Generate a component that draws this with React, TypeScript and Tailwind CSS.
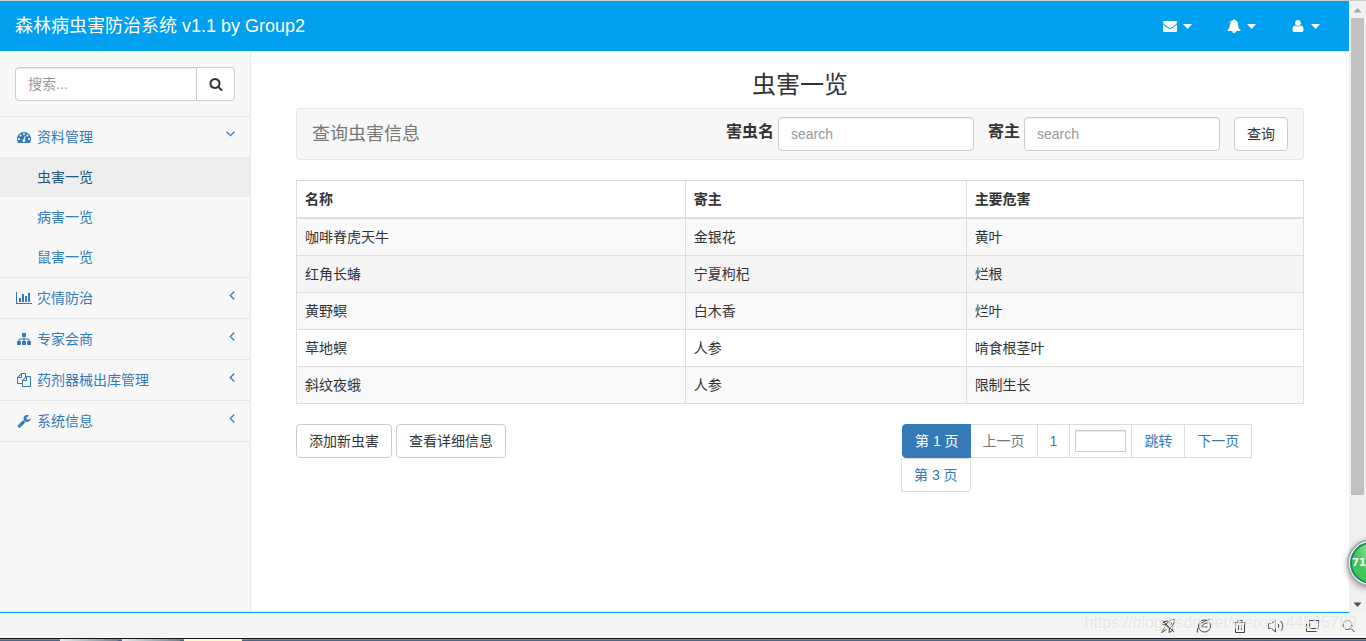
import React from "react";

const icons = {
  envelope:
    "M1792 710v794q0 66-47 113t-113 47h-1472q-66 0-113-47t-47-113v-794q44 49 101 87 362 246 497 345 57 42 92.5 65.5t94.5 48 110 24.5h2q51 0 110-24.5t94.5-48 92.5-65.5q170-123 498-345 57-39 100-87zm0-294q0 79-49 151t-122 123q-376 261-468 325-10 7-42.5 31t-54 38.5-52 32.5-57.5 27-50 9h-2q-23 0-50-9t-57.5-27-52-32.5-54-38.5-42.5-31q-91-64-262-182.5t-205-142.5q-62-42-117-115.5t-55-136.5q0-78 41.5-130t118.5-52h1472q65 0 112.5 47t47.5 113z",
  bell: "M912 1696q0-16-16-16-59 0-101.5-42.5t-42.5-101.5q0-16-16-16t-16 16q0 73 51.5 124.5t124.5 51.5q16 0 16-16zm816-288q0 52-38 90t-90 38h-448q0 106-75 181t-181 75-181-75-75-181h-448q-52 0-90-38t-38-90q50-42 91-88t85-119.5 74.5-158.5 50-206 19.5-260q0-152 117-282.5t307-158.5q-8-19-8-39 0-40 28-68t68-28 68 28 28 68q0 20-8 39 190 28 307 158.5t117 282.5q0 139 19.5 260t50 206 74.5 158.5 85 119.5 91 88z",
  user: "M1600 1405q0 120-73 189.5t-194 69.5h-874q-121 0-194-69.5t-73-189.5q0-53 3.500-103.500t14-109 26.500-108.500 43-97.500 62-81 85.500-53.500 111.500-20q9 0 42 21.500t74.500 48 108 48 133.500 21.500 133.500-21.500 108-48 74.500-48 42-21.500q61 0 111.500 20t85.500 53.500 62 81 43 97.500 26.500 108.500 14 109 3.500 103.500zm-320-893q0 159-112.500 271.500t-271.500 112.500-271.500-112.500-112.500-271.500 112.500-271.500 271.500-112.500 271.500 112.500 112.500 271.500z",
  search:
    "M1216 832q0-185-131.5-316.5t-316.5-131.5-316.5 131.5-131.5 316.5 131.5 316.5 316.5 131.5 316.5-131.5 131.5-316.5zm512 832q0 52-38 90t-90 38q-54 0-90-38l-343-342q-179 124-399 124-143 0-273.5-55.5t-225-150-150-225-55.5-273.5 55.5-273.5 150-225 225-150 273.5-55.5 273.5 55.5 225 150 150 225 55.5 273.5q0 220-124 399l343 343q37 37 37 90z",
  dashboard:
    "M384 1152q0-53-37.5-90.5t-90.5-37.5-90.5 37.5-37.5 90.5 37.5 90.5 90.5 37.5 90.5-37.5 37.5-90.5zm192-448q0-53-37.5-90.5t-90.5-37.5-90.5 37.5-37.5 90.5 37.5 90.5 90.5 37.5 90.5-37.5 37.5-90.5zm428 481l101-382q6-26-7.5-48.5t-38.5-29.5-48 6.5-30 39.5l-101 382q-60 5-107 43.5t-63 98.5q-20 77 20 146t117 89 146-20 89-117q16-60-6-117t-72-91zm660-33q0-53-37.5-90.5t-90.5-37.5-90.5 37.5-37.5 90.5 37.5 90.5 90.5 37.5 90.5-37.5 37.5-90.5zm-640-640q0-53-37.5-90.5t-90.5-37.5-90.5 37.5-37.5 90.5 37.5 90.5 90.5 37.5 90.5-37.5 37.5-90.5zm448 192q0-53-37.5-90.5t-90.5-37.5-90.5 37.5-37.5 90.5 37.5 90.5 90.5 37.5 90.5-37.5 37.5-90.5zm320 448q0 261-141 483-19 29-54 29h-1402q-35 0-54-29-141-221-141-483 0-182 71-348t191-286 286-191 348-71 348 71 286 191 191 286 71 348z",
  chart:
    "M640 896v512h-256v-512h256zm384-512v1024h-256v-1024h256zm1024 1152v128h-2048v-1536h128v1408h1920zm-640-896v768h-256v-768h256zm384-384v1152h-256v-1152h256z",
  sitemap:
    "M1792 1248v320q0 40-28 68t-68 28h-320q-40 0-68-28t-28-68v-320q0-40 28-68t68-28h96v-192h-512v192h96q40 0 68 28t28 68v320q0 40-28 68t-68 28h-320q-40 0-68-28t-28-68v-320q0-40 28-68t68-28h96v-192h-512v192h96q40 0 68 28t28 68v320q0 40-28 68t-68 28h-320q-40 0-68-28t-28-68v-320q0-40 28-68t68-28h96v-192q0-52 38-90t90-38h512v-192h-96q-40 0-68-28t-28-68v-320q0-40 28-68t68-28h320q40 0 68 28t28 68v320q0 40-28 68t-68 28h-96v192h512q52 0 90 38t38 90v192h96q40 0 68 28t28 68z",
  files:
    "M1696 384q40 0 68 28t28 68v1216q0 40-28 68t-68 28h-960q-40 0-68-28t-28-68v-288h-544q-40 0-68-28t-28-68v-672q0-40 20-88t48-76l408-408q28-28 76-48t88-20h416q40 0 68 28t28 68v328q68-40 128-40h416zm-544 213l-299 299h299v-299zm-640-384l-299 299h299v-299zm196 647l316-316v-416h-384v416q0 40-28 68t-68 28h-416v640h512v-256q0-40 20-88t48-76zm956 804v-1152h-384v416q0 40-28 68t-68 28h-416v640h896z",
  wrench:
    "M448 1472q0-26-19-45t-45-19-45 19-19 45 19 45 45 19 45-19 19-45zm644-420l-682 682q-37 37-90 37-52 0-91-37l-106-108q-38-36-38-90 0-53 38-91l681-681q39 98 114.5 173.5t173.5 114.5zm634-435q0 39-23 106-47 134-164.5 217.5t-258.5 83.5q-185 0-316.5-131.5t-131.5-316.5 131.5-316.5 316.5-131.5q58 0 121.5 16.5t107.5 46.5q16 11 16 28t-16 28l-293 169v224l193 107q5-3 79-48.5t135.5-81 70.5-35.5q15 0 23.5 10t8.5 25z",
};

type IconName = keyof typeof icons;

const Icon = ({ name }: { name: IconName }) => (
  <span className="flex w-[18px] shrink-0 justify-center">
    {name === "chart" ? (
      <svg viewBox="0 0 2048 1792" className="h-[14px] w-4 fill-current">
        <path d={icons.chart} />
      </svg>
    ) : (
      <svg viewBox="0 0 1792 1792" className="size-[14px] fill-current">
        <path d={icons[name]} />
      </svg>
    )}
  </span>
);

const subMenu = ["虫害一览", "病害一览", "鼠害一览"];

const menu: { icon: IconName; text: string }[] = [
  { icon: "chart", text: "灾情防治" },
  { icon: "sitemap", text: "专家会商" },
  { icon: "files", text: "药剂器械出库管理" },
  { icon: "wrench", text: "系统信息" },
];

const rows = [
  ["咖啡脊虎天牛", "金银花", "黄叶"],
  ["红角长蝽", "宁夏枸杞", "烂根"],
  ["黄野螟", "白木香", "烂叶"],
  ["草地螟", "人参", "啃食根茎叶"],
  ["斜纹夜蛾", "人参", "限制生长"],
];

const button =
  "h-[34px] rounded border border-[#ccc] bg-white px-3 text-[#333] whitespace-nowrap";
const input =
  "h-[34px] rounded border border-[#ccc] bg-white px-3 placeholder:text-[#999] shadow-[inset_0_1px_1px_rgba(0,0,0,0.075)] outline-none";
const pageLink =
  "flex h-[34px] items-center border border-[#ddd] bg-white px-3 text-[#337ab7] whitespace-nowrap";

const Header = () => (
  <header className="flex h-[51px] shrink-0 items-center justify-between border-b border-[#e7e7e7] bg-[#01a0ee] pr-[29px] pl-[15px] text-white">
    <a href="#" className="text-lg leading-5">
      森林病虫害防治系统 v1.1 by Group2
    </a>
    <nav className="flex gap-[33px]">
      {(["envelope", "bell", "user"] as IconName[]).map((name) => (
        <a key={name} href="#" aria-label={name} className="flex items-center gap-1">
          <Icon name={name} />
          <svg viewBox="0 0 9 5" className="h-[5px] w-[9px] fill-current">
            <path d="M0 0h9L4.500 5z" />
          </svg>
        </a>
      ))}
    </nav>
  </header>
);

const Sidebar = () => (
  <aside className="w-[251px] shrink-0 border-r border-[#e7e7e7] bg-[#f8f8f8] text-[#337ab7]">
    <form className="flex border-b border-[#e7e7e7] p-[15px]">
      <input
        type="text"
        aria-label="搜索"
        placeholder="搜索..."
        className="h-[34px] min-w-0 flex-1 rounded-l border border-[#ccc] bg-white px-3 shadow-[inset_0_1px_1px_rgba(0,0,0,0.075)] outline-none placeholder:text-[#999]"
      />
      <button
        type="button"
        aria-label="search"
        className="-ml-px flex h-[34px] w-[39px] items-center justify-center rounded-r border border-[#ccc] bg-white text-[#333]"
      >
        <Icon name="search" />
      </button>
    </form>
    <ul>
      <li className="border-b border-[#e7e7e7]">
        <a href="#" className="flex h-10 items-center gap-1 px-[15px]">
          <Icon name="dashboard" />
          <span className="flex-1">资料管理</span>
          <span className="pb-1.5">
            <svg viewBox="0 0 9 6" className="h-1.5 w-[9px] fill-none stroke-current stroke-[1.3]">
              <path d="M.5.7l4 4 4-4" />
            </svg>
          </span>
        </a>
        <ul>
          {subMenu.map((text, i) => (
            <li key={text}>
              <a
                href="#"
                className={
                  i === 0
                    ? "flex h-10 items-center bg-[#eee] pl-[37px] text-[#23527c]"
                    : "flex h-10 items-center pl-[37px]"
                }
              >
                {text}
              </a>
            </li>
          ))}
        </ul>
      </li>
      {menu.map((item) => (
        <li key={item.text} className="border-b border-[#e7e7e7]">
          <a href="#" className="flex h-10 items-center gap-1 px-[15px]">
            <Icon name={item.icon} />
            <span className="flex-1">{item.text}</span>
            <span className="pb-1.5">
              <svg viewBox="0 0 6 9" className="h-[9px] w-1.5 fill-none stroke-current stroke-[1.3]">
                <path d="M5.300.5l-4 4 4 4" />
              </svg>
            </span>
          </a>
        </li>
      ))}
    </ul>
  </aside>
);

const SearchPanel = () => (
  <form className="flex items-center justify-between rounded border border-[#e7e7e7] bg-[#f8f8f8] px-[15px] py-2">
    <span className="text-lg leading-5 text-[#777]">查询虫害信息</span>
    <div className="flex items-center">
      <label htmlFor="pest" className="mr-1 pb-1 text-base leading-5 font-bold">
        害虫名
      </label>
      <input id="pest" type="text" placeholder="search" className={`${input} mr-[14px] w-49`} />
      <label htmlFor="host" className="mr-1 pb-1 text-base leading-5 font-bold">
        寄主
      </label>
      <input id="host" type="text" placeholder="search" className={`${input} mr-[14px] w-49`} />
      <button type="button" className={button}>
        查询
      </button>
    </div>
  </form>
);

const PestTable = () => (
  <table className="mt-5 w-full table-fixed border-collapse text-left">
    <thead>
      <tr>
        <th className="w-[38.600%] border border-b-2 border-[#ddd] p-2">名称</th>
        <th className="w-[27.900%] border border-b-2 border-[#ddd] p-2">寄主</th>
        <th className="border border-b-2 border-[#ddd] p-2">主要危害</th>
      </tr>
    </thead>
    <tbody>
      {rows.map((row, i) => (
        <tr
          key={row[0]}
          className={i === 1 ? "bg-[#f5f5f5]" : i % 2 === 0 ? "bg-[#f9f9f9]" : "bg-white"}
        >
          {row.map((cell) => (
            <td key={cell} className="border border-[#ddd] p-2">
              {cell}
            </td>
          ))}
        </tr>
      ))}
    </tbody>
  </table>
);

const Pagination = () => (
  <ul className="flex w-[402px] flex-wrap">
    <li>
      <a href="#" className="flex h-[34px] items-center rounded-l border border-[#337ab7] bg-[#337ab7] px-3 whitespace-nowrap text-white">
        第 1 页
      </a>
    </li>
    <li className="-ml-px">
      <a href="#" className="flex h-[34px] items-center border border-l-0 border-[#ddd] bg-white px-3 whitespace-nowrap text-[#777]">
        上一页
      </a>
    </li>
    <li className="-ml-px">
      <a href="#" className={pageLink}>
        1
      </a>
    </li>
    <li className="-ml-px flex h-[34px] items-center border border-[#ddd] px-[5px]">
      <input
        type="text"
        aria-label="page"
        className="h-[22px] w-[51px] border border-[#ccc] bg-white px-1 shadow-[inset_0_1px_1px_rgba(0,0,0,0.1)] outline-none"
      />
    </li>
    <li className="-ml-px">
      <a href="#" className={pageLink}>
        跳转
      </a>
    </li>
    <li className="-ml-px">
      <a href="#" className={pageLink}>
        下一页
      </a>
    </li>
    <li className="-ml-px">
      <a href="#" className={`${pageLink} rounded-r`}>
        第 3 页
      </a>
    </li>
  </ul>
);

const Scrollbar = () => (
  <div className="flex w-[17px] shrink-0 flex-col bg-[#f1f1f1]">
    <svg viewBox="0 0 17 17" className="size-[17px] fill-[#a3a3a3]">
      <path d="M8.500 7l4 4.500h-8z" />
    </svg>
    <div className="flex-1 px-0.5">
      <div className="h-[82.500%] bg-[#c1c1c1]" />
    </div>
    <svg viewBox="0 0 17 17" className="size-[17px] fill-[#505050]">
      <path d="M8.500 11l4-4.500h-8z" />
    </svg>
  </div>
);

const StatusBar = () => (
  <footer className="relative flex h-[25px] shrink-0 items-center justify-end gap-5 bg-[#f4f4f4] pr-[10px] text-[#444]">
    {/* rocket */}
    <svg viewBox="0 0 16 16" className="size-4 fill-none stroke-current">
      <path d="M14.500 1.500c-4.500 0-6.500 2-9 5.500l3.500 3.500c3.500-2.500 5.500-4.500 5.500-9zM6 6.500l-4 .5 2-3.500 4-.5M9.500 10.500l-.5 4 3.500-2 .5-4M4.500 9.500l-3 5 5-3M2 2l12 12" />
      <circle cx="10.500" cy="5.500" r="1" />
    </svg>
    {/* browser mode */}
    <svg viewBox="0 0 16 16" className="size-4 fill-none stroke-current">
      <circle cx="8.500" cy="8" r="6" />
      <path d="M1.500 14.500c-1.500-4 4-12 12.500-13M5 9c2-3 4-4 7-4M6 9h6" />
    </svg>
    {/* trash */}
    <svg viewBox="0 0 16 16" className="size-4 fill-none stroke-current">
      <path d="M1.500 4.500h13M5.500 4.500v-2h5v2M3.500 4.500v10h9v-10M6.500 7v5M9.500 7v5" />
    </svg>
    {/* speaker */}
    <svg viewBox="0 0 16 16" className="size-4 fill-none stroke-current">
      <path d="M.5 5.500h3l4-3.500v12l-4-3.500h-3zM10 6c1 1 1 3 0 4M12.500 3c3 2.500 3 7.500 0 10" />
    </svg>
    {/* windows */}
    <svg viewBox="0 0 16 16" className="size-4 fill-none stroke-current">
      <path d="M5.500 2.500h9v8h-9zM2.500 5v8.500h10" />
    </svg>
    {/* zoom */}
    <svg viewBox="0 0 16 16" className="size-4 fill-none stroke-current">
      <circle cx="7.500" cy="7" r="4.500" />
      <path d="M11 10.500l3.500 3.500" />
    </svg>
    <span className="absolute top-0 right-[9px] text-base leading-5 whitespace-nowrap text-[#e0e0e0]/70 [text-shadow:1px_1px_0_#ffffffaa]">
      https://blog.csdn.net/weixin_44595789
    </span>
  </footer>
);

const Taskbar = () => (
  <div className="flex h-[3px] shrink-0 gap-1 border-t border-[#101820] bg-linear-to-b from-[#8593ab] to-[#3d5575] pl-[60px]">
    <div className="w-[58px] bg-linear-to-r from-[#e8ecee] to-[#76818c]" />
    <div className="w-[58px] bg-linear-to-r from-[#e8ecee] to-[#76818c]" />
    <div className="w-[58px] bg-[#fbf8cc]" />
  </div>
);

const App = () => {
  return (
    <div className="relative flex h-screen flex-col overflow-hidden border-t border-[#ccc] bg-white font-['Liberation_Sans','Noto_Sans_CJK_SC',sans-serif] text-sm leading-5 text-[#333]">
      <div className="flex min-h-0 flex-1">
        <div className="flex min-w-0 flex-1 flex-col border-b border-[#01a0ee]">
          <Header />
          <div className="flex min-h-0 flex-1">
            <Sidebar />
            <main className="min-w-0 flex-1 px-[45px] pt-5">
              <h3 className="mb-2.5 text-center text-2xl leading-[26px] font-normal">虫害一览</h3>
              <SearchPanel />
              <PestTable />
              <div className="mt-5 flex items-start justify-between">
                <div className="flex gap-1">
                  <button type="button" className={button}>
                    添加新虫害
                  </button>
                  <button type="button" className={button}>
                    查看详细信息
                  </button>
                </div>
                <Pagination />
              </div>
            </main>
          </div>
        </div>
        <Scrollbar />
      </div>
      <StatusBar />
      <Taskbar />
      {/* floating score ball, half hidden at the window edge */}
      <div className="absolute -right-[29px] bottom-[54px] size-12 rounded-full border-2 border-[#aaa] bg-white p-px shadow-[0_2px_6px_rgba(0,0,0,0.35)]">
        <div className="flex size-full items-center rounded-full border-2 border-[#1b8a5a] bg-radial-[at_50%_0%] from-[#a5e8a0] to-[#3fc45a] to-60% font-['DejaVu_Sans',sans-serif] text-[10px] font-bold text-white">
          71
        </div>
      </div>
    </div>
  );
};

export default App;
